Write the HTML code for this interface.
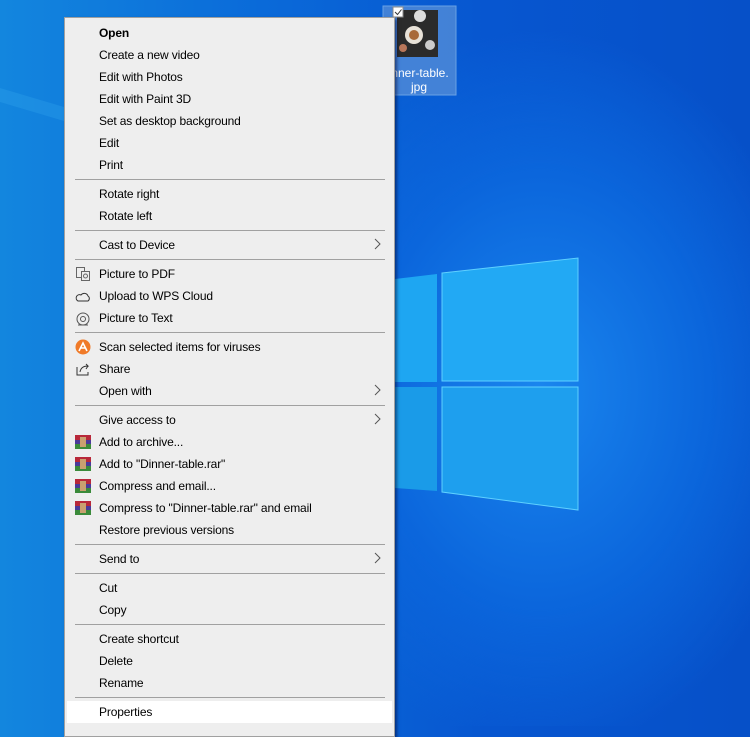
<!DOCTYPE html>
<html><head><style>
*{margin:0;padding:0;box-sizing:border-box}
body{width:750px;height:726px;overflow:hidden;position:relative;font-family:"Liberation Sans",sans-serif;
background:radial-gradient(ellipse 280px 360px at 540px 390px,#1a86ee 0%,#0b66dc 60%,rgba(10,90,210,0) 100%),linear-gradient(90deg,#1386de 0%,#0a6ad9 35%,#0756d0 65%,#0650c8 100%)}
.bg{position:absolute;left:0;top:0}
.menu{position:absolute;left:64px;top:17px;width:331px;height:720px;background:#eeeeee;border:1px solid #a0a0a0;box-shadow:2px 2px 3px rgba(0,0,40,.5)}
.it{position:absolute;left:34px;font-size:12px;letter-spacing:-0.15px;color:#000;line-height:14px;white-space:nowrap}
.sep{position:absolute;left:10px;width:310px;height:1px;background:#a0a0a0}
.arr{position:absolute;left:308px;width:10px;height:12px}
.ic{position:absolute;left:10px;width:16px;height:16px}
.hl{position:absolute;left:2px;width:325px;height:22px;background:#fff}
</style></head><body>
<svg class="bg" width="750" height="726">
<polygon points="0,88 64,107 64,121 0,102" fill="#3ab0f5" opacity=".25"/>
<polygon points="395,279 437,274 437,382 395,382" fill="#1ea6f2"/>
<polygon points="442,273 578,258 578,381 442,381" fill="#22a9f4" stroke="#5fd0ff" stroke-width="1"/>
<polygon points="395,387 437,387 437,491 395,488" fill="#1a9be8"/>
<polygon points="442,387 578,387 578,510 442,492" fill="#1e9fee" stroke="#5fd0ff" stroke-width="1"/>
<rect x="383" y="6" width="73" height="89" fill="#4e89d8" stroke="#7aaee8" opacity=".85"/>
<rect x="397" y="10" width="41" height="47" fill="#2b2b2b"/>
<circle cx="414" cy="35" r="9" fill="#e8e2d8"/><circle cx="414" cy="35" r="5" fill="#a86a3a"/>
<circle cx="420" cy="16" r="6" fill="#ddd"/><circle cx="430" cy="45" r="5" fill="#ccc"/><circle cx="403" cy="48" r="4" fill="#b9775a"/>
<rect x="393" y="7" width="10" height="10" fill="#fff" stroke="#888"/>
<path d="M395 12 l2.5 2.5 l4 -5" stroke="#333" fill="none"/>
<text x="420" y="77" fill="#fff" font-size="12" font-family="Liberation Sans" text-anchor="middle">nner-table.</text>
<text x="419" y="91" fill="#fff" font-size="12" font-family="Liberation Sans" text-anchor="middle">jpg</text>
</svg>
<div class="menu">
<div class="hl" style="top:683px"></div>
<div class="it" style="top:8px;font-weight:bold">Open</div>
<div class="it" style="top:30px">Create a new video</div>
<div class="it" style="top:52px">Edit with Photos</div>
<div class="it" style="top:74px">Edit with Paint 3D</div>
<div class="it" style="top:96px">Set as desktop background</div>
<div class="it" style="top:118px">Edit</div>
<div class="it" style="top:140px">Print</div>
<div class="sep" style="top:161px"></div>
<div class="it" style="top:169px">Rotate right</div>
<div class="it" style="top:191px">Rotate left</div>
<div class="sep" style="top:212px"></div>
<div class="it" style="top:220px">Cast to Device</div>
<svg class="arr" style="top:220px"><path d="M2 1 l5 5 l-5 5" stroke="#555" fill="none"/></svg>
<div class="sep" style="top:241px"></div>
<svg class="ic" style="top:248px"><rect x="1.5" y="1.5" width="8" height="10" fill="none" stroke="#666"/><rect x="6.5" y="5.5" width="8" height="9" fill="#eee" stroke="#666"/><circle cx="10.5" cy="10" r="2" fill="none" stroke="#666"/></svg>
<div class="it" style="top:249px">Picture to PDF</div>
<svg class="ic" style="top:271px"><path d="M3 12 h10 a3 3 0 0 0 0-5 a4 4 0 0 0-7-1 a3 3 0 0 0-3 6z" fill="none" stroke="#333"/></svg>
<div class="it" style="top:271px">Upload to WPS Cloud</div>
<svg class="ic" style="top:293px"><circle cx="8" cy="8" r="6" fill="none" stroke="#555"/><circle cx="8" cy="8" r="2.5" fill="none" stroke="#555"/><path d="M3 14 h10" stroke="#555"/></svg>
<div class="it" style="top:293px">Picture to Text</div>
<div class="sep" style="top:314px"></div>
<svg class="ic" style="top:321px"><circle cx="8" cy="8" r="7.5" fill="#f07a28"/><path d="M4 12 L8 4 L12 12 M5 9 h6" stroke="#fff" stroke-width="1.6" fill="none"/></svg>
<div class="it" style="top:322px">Scan selected items for viruses</div>
<svg class="ic" style="top:343px"><path d="M2 6 v8 h11 v-3" fill="none" stroke="#333"/><path d="M5 11 q1-6 8-6 l-2-2 M13 5 l-2 3" fill="none" stroke="#333"/></svg>
<div class="it" style="top:344px">Share</div>
<div class="it" style="top:366px">Open with</div>
<svg class="arr" style="top:366px"><path d="M2 1 l5 5 l-5 5" stroke="#555" fill="none"/></svg>
<div class="sep" style="top:387px"></div>
<div class="it" style="top:395px">Give access to</div>
<svg class="arr" style="top:395px"><path d="M2 1 l5 5 l-5 5" stroke="#555" fill="none"/></svg>
<svg class="ic" style="top:416px"><rect x="0" y="1" width="16" height="5" fill="#b8283a"/><rect x="0" y="6" width="16" height="4" fill="#4a3a9a"/><rect x="0" y="10" width="16" height="5" fill="#3a8a3a"/><rect x="5" y="3" width="6" height="10" fill="#c9a070"/></svg>
<div class="it" style="top:417px">Add to archive...</div>
<svg class="ic" style="top:438px"><rect x="0" y="1" width="16" height="5" fill="#b8283a"/><rect x="0" y="6" width="16" height="4" fill="#4a3a9a"/><rect x="0" y="10" width="16" height="5" fill="#3a8a3a"/><rect x="5" y="3" width="6" height="10" fill="#c9a070"/></svg>
<div class="it" style="top:439px">Add to "Dinner-table.rar"</div>
<svg class="ic" style="top:460px"><rect x="0" y="1" width="16" height="5" fill="#b8283a"/><rect x="0" y="6" width="16" height="4" fill="#4a3a9a"/><rect x="0" y="10" width="16" height="5" fill="#3a8a3a"/><rect x="5" y="3" width="6" height="10" fill="#c9a070"/></svg>
<div class="it" style="top:461px">Compress and email...</div>
<svg class="ic" style="top:482px"><rect x="0" y="1" width="16" height="5" fill="#b8283a"/><rect x="0" y="6" width="16" height="4" fill="#4a3a9a"/><rect x="0" y="10" width="16" height="5" fill="#3a8a3a"/><rect x="5" y="3" width="6" height="10" fill="#c9a070"/></svg>
<div class="it" style="top:483px">Compress to "Dinner-table.rar" and email</div>
<div class="it" style="top:505px">Restore previous versions</div>
<div class="sep" style="top:526px"></div>
<div class="it" style="top:534px">Send to</div>
<svg class="arr" style="top:534px"><path d="M2 1 l5 5 l-5 5" stroke="#555" fill="none"/></svg>
<div class="sep" style="top:555px"></div>
<div class="it" style="top:563px">Cut</div>
<div class="it" style="top:585px">Copy</div>
<div class="sep" style="top:606px"></div>
<div class="it" style="top:614px">Create shortcut</div>
<div class="it" style="top:636px">Delete</div>
<div class="it" style="top:658px">Rename</div>
<div class="sep" style="top:679px"></div>
<div class="it" style="top:687px">Properties</div>
</div>
</body></html>
